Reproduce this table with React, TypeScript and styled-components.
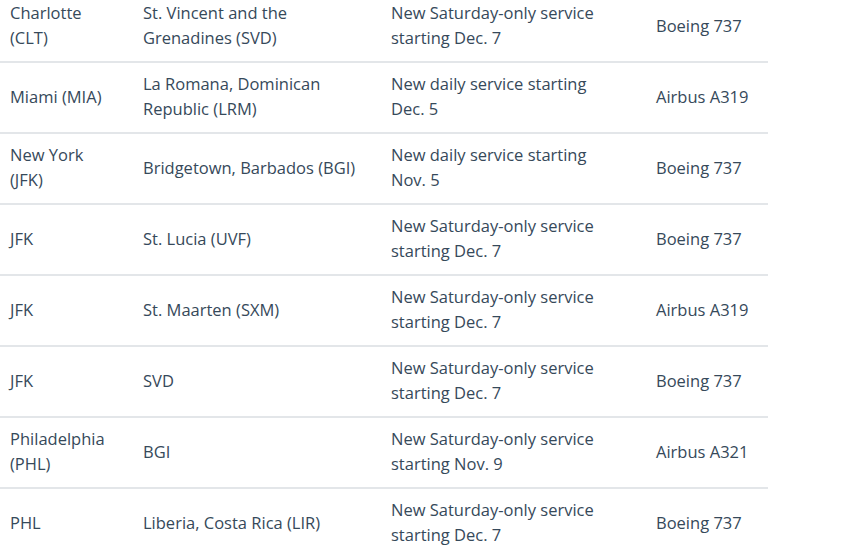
import React from "react";
import styled, { createGlobalStyle } from "styled-components";

const Global = createGlobalStyle`
  html, body { margin: 0; padding: 0; background: #ffffff; }
  body { font-family: "Open Sans", "Liberation Sans", sans-serif; }
`;

const Wrap = styled.div`
  width: 768px;
  margin-top: -8px;
`;

const Table = styled.table`
  width: 768px;
  border-collapse: collapse;
  table-layout: fixed;
`;

const Row = styled.tr`
  border-bottom: 2px solid #e3e6e9;
  &:last-child { border-bottom: none; }
`;

const Cell = styled.td<{ $pr: number }>`
  padding: 8px ${(p) => p.$pr}px 11px 10px;
  height: 50px;
  box-sizing: content-box;
  vertical-align: middle;
  font-size: 16.5px;
  line-height: 25px;
  color: #36495a;
`;

const widths = [133, 248, 265, 122];
const rightPad = [20, 20, 40, 8];

const rows: string[][] = [
  ["Charlotte (CLT)", "St. Vincent and the Grenadines (SVD)", "New Saturday-only service starting Dec. 7", "Boeing 737"],
  ["Miami (MIA)", "La Romana, Dominican Republic (LRM)", "New daily service starting Dec. 5", "Airbus A319"],
  ["New York (JFK)", "Bridgetown, Barbados (BGI)", "New daily service starting Nov. 5", "Boeing 737"],
  ["JFK", "St. Lucia (UVF)", "New Saturday-only service starting Dec. 7", "Boeing 737"],
  ["JFK", "St. Maarten (SXM)", "New Saturday-only service starting Dec. 7", "Airbus A319"],
  ["JFK", "SVD", "New Saturday-only service starting Dec. 7", "Boeing 737"],
  ["Philadelphia (PHL)", "BGI", "New Saturday-only service starting Nov. 9", "Airbus A321"],
  ["PHL", "Liberia, Costa Rica (LIR)", "New Saturday-only service starting Dec. 7", "Boeing 737"],
];

export default function App() {
  return (
    <>
      <Global />
      <Wrap>
        <Table>
          <colgroup>
            {widths.map((w, i) => (
              <col key={i} style={{ width: w }} />
            ))}
          </colgroup>
          <tbody>
            {rows.map((r, i) => (
              <Row key={i}>
                {r.map((c, j) => (
                  <Cell key={j} $pr={rightPad[j]}>{c}</Cell>
                ))}
              </Row>
            ))}
          </tbody>
        </Table>
      </Wrap>
    </>
  );
}
